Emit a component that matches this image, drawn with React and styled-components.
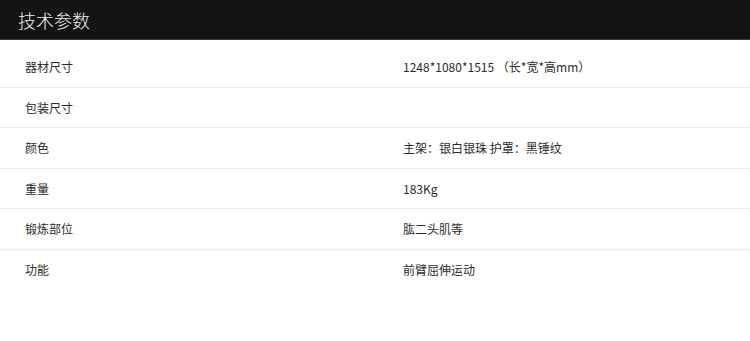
import React from "react"
import styled, { createGlobalStyle } from "styled-components"

const GlobalStyle = createGlobalStyle`
  body {
    margin: 0;
    background: #fff;
    font-family: "Noto Sans CJK SC", "Noto Sans", sans-serif;
  }
`

const Page = styled.div`
  width: 750px;
  height: 341px;
  background: #fff;
  overflow: hidden;
`

const Header = styled.div`
  height: 39px;
  border-bottom: 1px solid #3a3a3a;
  background: #141414;
  display: flex;
  align-items: center;
  padding-left: 18px;
  color: #f2f2f2;
  font-size: 18px;
  font-weight: 300;
`

const Table = styled.div`
  margin-top: 7px;
`

const Row = styled.div`
  display: grid;
  grid-template-columns: 378px 1fr;
  align-items: center;
  height: 40.5px;
  box-sizing: border-box;
  border-bottom: ${props => (props.$last ? "none" : "1px solid #ebebeb")};
  font-size: 12px;
  color: #2b2b2b;
`

const Cell = styled.div`
  padding-left: 25px;
  white-space: nowrap;
`

const specs = [
  ["器材尺寸", "1248*1080*1515 （长*宽*高mm）"],
  ["包装尺寸", ""],
  ["颜色", "主架：银白银珠 护罩：黑锤纹"],
  ["重量", "183Kg"],
  ["锻炼部位", "肱二头肌等"],
  ["功能", "前臂屈伸运动"],
]

const App = () => {
  return (
    <Page>
      <GlobalStyle />
      <Header>技术参数</Header>
      <Table>
        {specs.map(([label, value], i) => (
          <Row key={label} $last={i === specs.length - 1}>
            <Cell>{label}</Cell>
            <Cell>{value}</Cell>
          </Row>
        ))}
      </Table>
    </Page>
  )
}

export default App
